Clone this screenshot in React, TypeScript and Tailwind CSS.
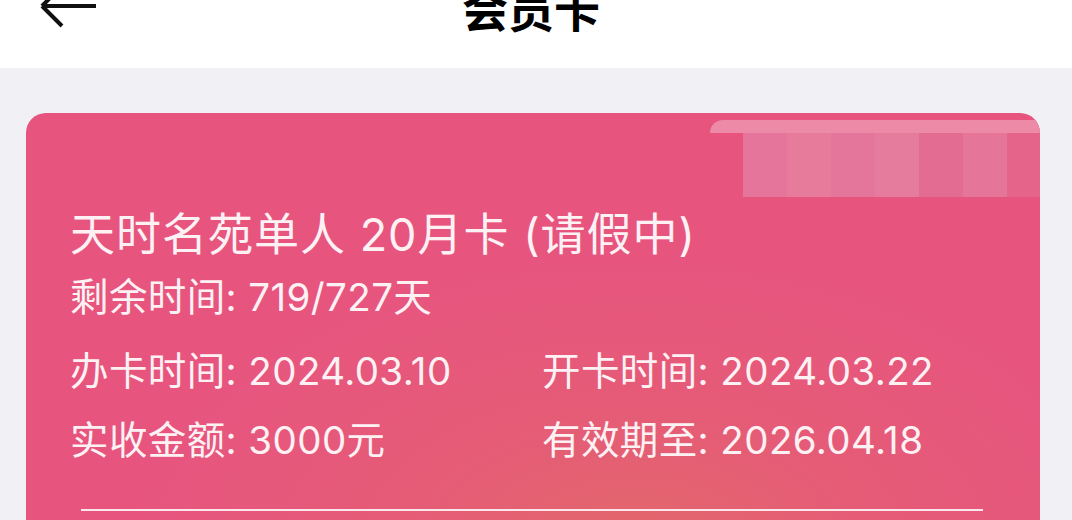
const cjk = "font-['Inter','Noto_Sans_CJK_SC',sans-serif]";

const rows: [string, string][] = [
  ["办卡时间: 2024.03.10", "开卡时间: 2024.03.22"],
  ["实收金额: 3000元", "有效期至: 2026.04.18"],
];

export default function App() {
  return (
    <div className={`w-[1072px] h-[520px] overflow-hidden bg-[#f1f0f5] ${cjk}`}>
      {/* header */}
      <header className="h-[68px] bg-white grid grid-cols-[1fr_auto_1fr] items-start">
        <div className="pl-[38px] -mt-[14px]">
          <svg width="60" height="44" viewBox="0 0 60 44" fill="none">
            <path d="M58 20H4M4 20L24 40M4 20L24 0" stroke="#111" strokeWidth="4" />
          </svg>
        </div>
        <h1 className="text-[46px] leading-[46px] font-bold text-black -mt-[16px] -ml-[10px] font-['Noto_Sans_CJK_SC',sans-serif]">会员卡</h1>
        <div />
      </header>

      {/* card */}
      <div className="ml-[26px] mr-[32px] mt-[45px] h-[460px] rounded-[20px] bg-[#e7557f] bg-[radial-gradient(ellipse_50%_65%_at_60%_95%,#e2676b_0%,rgba(228,98,110,0.45)_50%,transparent_100%)] relative overflow-hidden">
        {/* mosaic blur */}
        <div className="absolute left-[684px] top-[7px] w-[340px] h-[13px] rounded-tl-[28px] bg-[#ec8aa7]" />
        <div className="absolute left-[717px] top-[20px] w-[264px] h-[64px] flex">
          <div className="flex-1 bg-[#e5759a]" />
          <div className="flex-1 bg-[#e67b9c]" />
          <div className="flex-1 bg-[#e3769a]" />
          <div className="flex-1 bg-[#e57c9d]" />
          <div className="flex-1 bg-[#e36c93]" />
          <div className="flex-1 bg-[#e67699]" />
        </div>
        <div className="absolute left-[981px] top-[20px] w-[33px] h-[64px] bg-[#e5648a]" />

        <div className="pl-[44px] pt-[95px] text-[#fdf1f4] relative">
          <div className="text-[45px] leading-[54px] tracking-[1px]">天时名苑单人 20月卡 (请假中)</div>
          <div className="text-[38.5px] leading-[48px] tracking-[0.4px] mt-[11px]">剩余时间: 719/727天</div>
          <div className="mt-[26px] flex flex-col gap-[21px]">
            {rows.map(([a, b]) => (
              <div key={a} className="grid grid-cols-[472px_auto] text-[38.5px] leading-[48px] tracking-[0.4px]">
                <span>{a}</span>
                <span>{b}</span>
              </div>
            ))}
          </div>
          <div className="mt-[45px] ml-[11px] w-[902px] h-[2px] bg-[#fbe6ec]" />
        </div>
      </div>
    </div>
  );
}
